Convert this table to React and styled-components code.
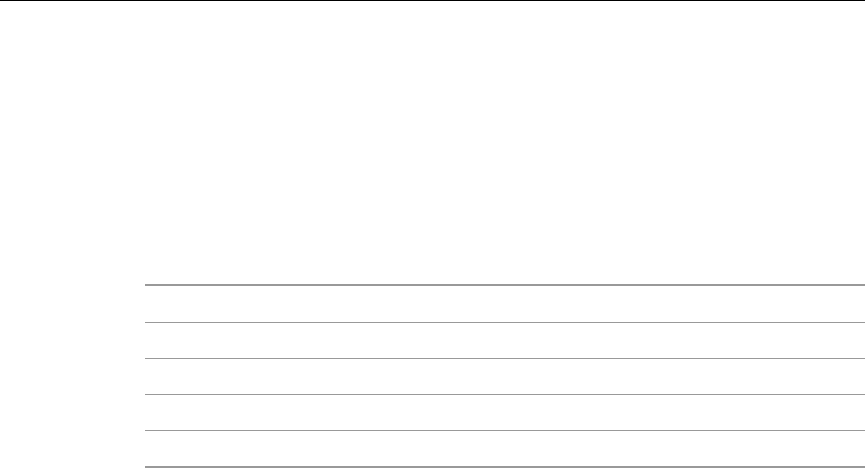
import React from "react";
import styled, { createGlobalStyle } from "styled-components";

const Global = createGlobalStyle`
  html, body { margin: 0; padding: 0; background: #fff; }
  body { font-family: "Liberation Sans", Arial, sans-serif; color: #222; }
`;

const Page = styled.div`
  width: 865px;
  height: 468px;
  display: flex;
  flex-direction: column;
  overflow: hidden;
`;

const TopBar = styled.header`
  height: 0;
  border-top: 1px solid #000;
`;

const Content = styled.main`
  flex: 1;
  display: flex;
  flex-direction: column;
  padding: 283px 0 0 145px;
`;

const Table = styled.div`
  display: flex;
  flex-direction: column;
  border-top: 2px solid #999;
  border-bottom: 2px solid #999;
`;

const Row = styled.div`
  height: ${(p) => (p.$first ? 36 : 35)}px;
  border-top: ${(p) => (p.$first ? "none" : "1px solid #999")};
`;

export default function App() {
  const rows = [0, 1, 2, 3, 4];
  return (
    <>
      <Global />
      <Page>
        <TopBar />
        <Content>
          <Table>
            {rows.map((r) => (
              <Row key={r} $first={r === 0} />
            ))}
          </Table>
        </Content>
      </Page>
    </>
  );
}
